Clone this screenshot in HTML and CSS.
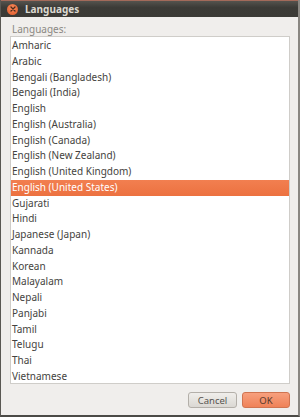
FILE: index.html
```html
<!DOCTYPE html>
<html lang="en">
<head>
    <meta charset="UTF-8">
    <meta name="viewport" content="width=device-width, initial-scale=1.0">
    <title>Languages</title>
    <link rel="stylesheet" href="styles.css">
</head>
<body>
    <div class="window">
        <div class="titlebar">
            <span class="close">
                <svg width="10" height="10" viewBox="0 0 10 10">
                    <path d="M3 3 L7 7 M7 3 L3 7" stroke="#4a2a1c" stroke-width="1.3" stroke-linecap="round"/>
                </svg>
            </span>
            <span class="title">Languages</span>
        </div>

        <div class="content">
            <div class="label">Languages:</div>
            <ul class="list">
                <li>Amharic</li>
                <li>Arabic</li>
                <li>Bengali (Bangladesh)</li>
                <li>Bengali (India)</li>
                <li>English</li>
                <li>English (Australia)</li>
                <li>English (Canada)</li>
                <li>English (New Zealand)</li>
                <li>English (United Kingdom)</li>
                <li class="selected">English (United States)</li>
                <li>Gujarati</li>
                <li>Hindi</li>
                <li>Japanese (Japan)</li>
                <li>Kannada</li>
                <li>Korean</li>
                <li>Malayalam</li>
                <li>Nepali</li>
                <li>Panjabi</li>
                <li>Tamil</li>
                <li>Telugu</li>
                <li>Thai</li>
                <li>Vietnamese</li>
            </ul>
            <div class="buttons">
                <button class="btn">Cancel</button>
                <button class="btn ok">OK</button>
            </div>
        </div>
    </div>
</body>
</html>
```

FILE: styles.css
```css
body {
    margin: 0;
    padding: 0;
    font-family: "Noto Sans", "DejaVu Sans", sans-serif;
    background: #f0efed;
}
.window {
    width: 300px;
    height: 417px;
    box-sizing: border-box;
    background: #f0eeec;
    border-left: 1px solid #5a5853;
    border-right: 2px solid #8a8782;
    border-bottom: 2px solid #4b4a46;
    display: flex;
    flex-direction: column;
}
.titlebar {
    height: 17px;
    background: linear-gradient(#55534e, #3c3b37 40%, #3b3a36);
    border-top: 1px solid #a36a5a;
    box-sizing: border-box;
    display: flex;
    align-items: center;
    padding-left: 6px;
    flex-shrink: 0;
}
.close {
    width: 11px;
    height: 11px;
    border-radius: 50%;
    background: radial-gradient(circle at 50% 35%, #f78a5a, #e0592a);
    display: flex;
    align-items: center;
    justify-content: center;
}
.title {
    color: #dcd9d1;
    font-weight: bold;
    font-size: 10px;
    margin-left: 7px;
}
.content {
    flex: 1;
    padding: 0 8px 0 9px;
    display: flex;
    flex-direction: column;
}
.label {
    color: #8a8883;
    font-size: 10px;
    height: 13px;
    line-height: 12px;
    margin-top: 6px;
    padding-left: 2px;
}
.list {
    list-style: none;
    margin: 0;
    padding: 1px 0 0 0;
    background: #fff;
    border: 1px solid #cfcdc9;
    height: 348px;
    box-sizing: border-box;
    overflow: hidden;
}
.list li {
    height: 15.76px;
    line-height: 15.76px;
    font-size: 10px;
    color: #444340;
    padding-left: 1px;
}
.list li.selected {
    background: linear-gradient(#f27f50, #ec7140);
    color: #fff;
}
.buttons {
    display: flex;
    justify-content: flex-end;
    gap: 5px;
    margin-top: 8px;
}
.btn {
    width: 49px;
    height: 16px;
    padding: 0;
    font-family: inherit;
    font-size: 9.5px;
    color: #55534f;
    border: 1px solid #b3afa9;
    border-radius: 3px;
    background: linear-gradient(#f0eeeb, #dbd8d3);
}
.btn.ok {
    width: 48px;
    border-color: #d07450;
    background: linear-gradient(#f7a07e, #ef8258);
    color: #5a3a2c;
}
```
